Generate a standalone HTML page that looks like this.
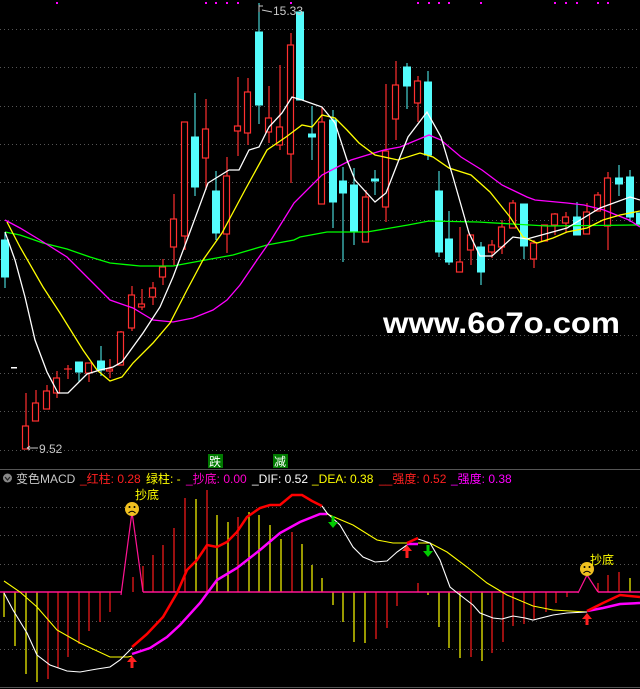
<!DOCTYPE html>
<html><head><meta charset="utf-8"><style>
html,body{margin:0;padding:0;background:#000;width:640px;height:689px;overflow:hidden}
svg{display:block}
text{font-family:"Liberation Sans","Noto Sans CJK SC",sans-serif}
</style></head><body>
<svg width="640" height="689" viewBox="0 0 640 689" xmlns="http://www.w3.org/2000/svg">
<g stroke="#555" stroke-dasharray="1,3" stroke-width="1">
<line x1="0" y1="29.5" x2="640" y2="29.5"/><line x1="0" y1="67.5" x2="640" y2="67.5"/><line x1="0" y1="106.5" x2="640" y2="106.5"/><line x1="0" y1="144.5" x2="640" y2="144.5"/><line x1="0" y1="182.5" x2="640" y2="182.5"/><line x1="0" y1="220.5" x2="640" y2="220.5"/><line x1="0" y1="259.5" x2="640" y2="259.5"/><line x1="0" y1="297.5" x2="640" y2="297.5"/><line x1="0" y1="335.5" x2="640" y2="335.5"/><line x1="0" y1="373.5" x2="640" y2="373.5"/><line x1="0" y1="411.5" x2="640" y2="411.5"/><line x1="0" y1="450.5" x2="640" y2="450.5"/>
<line x1="0" y1="507.5" x2="640" y2="507.5"/><line x1="0" y1="535.5" x2="640" y2="535.5"/><line x1="0" y1="564.5" x2="640" y2="564.5"/><line x1="0" y1="621.5" x2="640" y2="621.5"/><line x1="0" y1="649.5" x2="640" y2="649.5"/>
</g>
<line x1="0" y1="469.5" x2="640" y2="469.5" stroke="#555"/>
<line x1="0" y1="687.5" x2="640" y2="687.5" stroke="#555"/>
<g fill="#ff00ff">
<rect x="56" y="2" width="2" height="2"/><rect x="205" y="2" width="2" height="2"/><rect x="215" y="2" width="2" height="2"/><rect x="226" y="2" width="2" height="2"/><rect x="237" y="2" width="2" height="2"/><rect x="290" y="2" width="2" height="2"/><rect x="417" y="2" width="2" height="2"/><rect x="428" y="2" width="2" height="2"/><rect x="438" y="2" width="2" height="2"/><rect x="448" y="2" width="2" height="2"/><rect x="480" y="2" width="2" height="2"/><rect x="554" y="2" width="2" height="2"/><rect x="565" y="2" width="2" height="2"/><rect x="576" y="2" width="2" height="2"/><rect x="597" y="2" width="2" height="2"/><rect x="607" y="2" width="2" height="2"/>
</g>
<g stroke="#54fcfc" fill="#54fcfc">
<line x1="5" y1="232" x2="5" y2="288"/><rect x="1.5" y="240" width="7" height="37"/>
<line x1="79" y1="362" x2="79" y2="382"/><rect x="75.5" y="362" width="7" height="10"/>
<line x1="101" y1="346" x2="101" y2="376"/><rect x="97.5" y="361" width="7" height="9"/>
<line x1="195" y1="93" x2="195" y2="196"/><rect x="191.5" y="137" width="7" height="50"/>
<line x1="216" y1="171" x2="216" y2="240"/><rect x="212.5" y="191" width="7" height="42"/>
<line x1="259" y1="3" x2="259" y2="124"/><rect x="255.5" y="32" width="7" height="73"/>
<line x1="300" y1="12" x2="300" y2="100"/><rect x="296.5" y="12" width="7" height="88"/>
<line x1="312" y1="106" x2="312" y2="160"/><rect x="308.5" y="134" width="7" height="3"/>
<line x1="333" y1="110" x2="333" y2="228"/><rect x="329.5" y="120" width="7" height="82"/>
<line x1="343" y1="167" x2="343" y2="262"/><rect x="339.5" y="181" width="7" height="12"/>
<line x1="354" y1="168" x2="354" y2="245"/><rect x="350.5" y="185" width="7" height="47"/>
<line x1="375" y1="170" x2="375" y2="195"/><rect x="371.5" y="179" width="7" height="2"/>
<line x1="407" y1="63" x2="407" y2="109"/><rect x="403.5" y="67" width="7" height="19"/>
<line x1="428" y1="71" x2="428" y2="160"/><rect x="424.5" y="82" width="7" height="73"/>
<line x1="439" y1="171" x2="439" y2="257"/><rect x="435.5" y="191" width="7" height="61"/>
<line x1="449" y1="211" x2="449" y2="265"/><rect x="445.5" y="239" width="7" height="23"/>
<line x1="481" y1="242" x2="481" y2="285"/><rect x="477.5" y="247" width="7" height="25"/>
<line x1="524" y1="204" x2="524" y2="259"/><rect x="520.5" y="204" width="7" height="42"/>
<line x1="577" y1="202" x2="577" y2="235"/><rect x="573.5" y="217" width="7" height="18"/>
<line x1="619" y1="165" x2="619" y2="196"/><rect x="615.5" y="178" width="7" height="6"/>
<line x1="630" y1="170" x2="630" y2="222"/><rect x="626.5" y="177" width="7" height="40"/>
<rect x="636.5" y="213" width="7" height="11"/>
</g>
<g stroke="#ff3030" fill="#000" stroke-width="1.2">
<line x1="26" y1="393" x2="26" y2="449"/><rect x="22.5" y="426" width="6" height="23"/>
<line x1="36" y1="390" x2="36" y2="421"/><rect x="32.5" y="403" width="6" height="18"/>
<line x1="47" y1="385" x2="47" y2="409"/><rect x="43.5" y="391" width="6" height="18"/>
<line x1="57" y1="371" x2="57" y2="398"/><rect x="53.5" y="378" width="6" height="15"/>
<line x1="68" y1="365" x2="68" y2="379"/><line x1="64" y1="369" x2="72" y2="369"/>
<line x1="89" y1="363" x2="89" y2="382"/><rect x="85.5" y="363" width="6" height="10"/>
<line x1="110" y1="359" x2="110" y2="378"/><rect x="106.5" y="369" width="6" height="2"/>
<line x1="121" y1="331" x2="121" y2="365"/><rect x="117.5" y="332" width="6" height="33"/>
<line x1="132" y1="286" x2="132" y2="331"/><rect x="128.5" y="295" width="6" height="33"/>
<line x1="142" y1="289" x2="142" y2="310"/><rect x="138.5" y="304" width="6" height="3"/>
<line x1="153" y1="282" x2="153" y2="305"/><rect x="149.5" y="288" width="6" height="9"/>
<line x1="163" y1="259" x2="163" y2="285"/><rect x="159.5" y="267" width="6" height="10"/>
<line x1="174" y1="194" x2="174" y2="265"/><rect x="170.5" y="219" width="6" height="28"/>
<line x1="185" y1="122" x2="185" y2="250"/><rect x="181.5" y="122" width="6" height="114"/>
<line x1="206" y1="99" x2="206" y2="190"/><rect x="202.5" y="129" width="6" height="29"/>
<line x1="227" y1="157" x2="227" y2="253"/><rect x="223.5" y="176" width="6" height="58"/>
<line x1="238" y1="77" x2="238" y2="156"/><rect x="234.5" y="126" width="6" height="5"/>
<line x1="248" y1="78" x2="248" y2="145"/><rect x="244.5" y="92" width="6" height="41"/>
<line x1="269" y1="86" x2="269" y2="143"/><rect x="265.5" y="118" width="6" height="14"/>
<line x1="280" y1="65" x2="280" y2="150"/><rect x="276.5" y="127" width="6" height="18"/>
<line x1="291" y1="33" x2="291" y2="183"/><rect x="287.5" y="45" width="6" height="109"/>
<line x1="322" y1="107" x2="322" y2="204"/><rect x="318.5" y="122" width="6" height="82"/>
<line x1="366" y1="190" x2="366" y2="242"/><rect x="362.5" y="197" width="6" height="45"/>
<line x1="386" y1="84" x2="386" y2="222"/><rect x="382.5" y="151" width="6" height="56"/>
<line x1="396" y1="61" x2="396" y2="140"/><rect x="392.5" y="85" width="6" height="34"/>
<line x1="418" y1="76" x2="418" y2="122"/><rect x="414.5" y="81" width="6" height="22"/>
<line x1="460" y1="227" x2="460" y2="272"/><rect x="456.5" y="262" width="6" height="10"/>
<line x1="471" y1="235" x2="471" y2="265"/><rect x="467.5" y="235" width="6" height="15"/>
<line x1="492" y1="240" x2="492" y2="258"/><rect x="488.5" y="245" width="6" height="7"/>
<line x1="502" y1="220" x2="502" y2="254"/><rect x="498.5" y="227" width="6" height="20"/>
<line x1="513" y1="200" x2="513" y2="228"/><rect x="509.5" y="203" width="6" height="25"/>
<line x1="534" y1="240" x2="534" y2="268"/><rect x="530.5" y="243" width="6" height="16"/>
<line x1="545" y1="225" x2="545" y2="241"/><rect x="541.5" y="225" width="6" height="16"/>
<line x1="555" y1="213" x2="555" y2="235"/><rect x="551.5" y="214" width="6" height="11"/>
<line x1="566" y1="212" x2="566" y2="232"/><rect x="562.5" y="217" width="6" height="6"/>
<line x1="587" y1="203" x2="587" y2="234"/><rect x="583.5" y="212" width="6" height="22"/>
<line x1="598" y1="192" x2="598" y2="211"/><rect x="594.5" y="195" width="6" height="16"/>
<line x1="608" y1="172" x2="608" y2="250"/><rect x="604.5" y="178" width="6" height="48"/>
</g>
<g fill="none" stroke-width="1.3">
<polyline stroke="#00ff00" points="5,232 20,235 43,243 67,249 90,257 110,263 140,266 173,266 200,261 233,255 267,245 294,240 300,237 327,232 367,232 408,225 429,221 478,222 547,226 637,225 640,225"/>
<polyline stroke="#ff00ff" points="5,220 20,228 40,240 67,257 90,280 110,300 133,308 153,320 173,322 193,318 213,310 227,300 240,285 257,260 271,240 294,203 322,175 351,160 384,150 400,147 429,135 441,140 461,157 482,170 502,185 527,197 535,200 567,203 584,205 604,210 629,220 640,227"/>
<polyline stroke="#ffff00" points="7,222 20,247 43,287 60,313 83,350 97,370 110,381 122,377 133,363 153,343 170,323 187,290 203,260 222,233 245,190 267,150 286,137 302,125 312,127 322,115 335,118 347,130 359,143 375,155 398,160 420,153 433,157 449,168 471,175 490,192 510,217 523,237 537,243 553,238 567,232 587,228 603,220 620,215 640,211"/>
<polyline stroke="#ffffff" points="5,232 15,260 25,297 35,340 47,372 58,393 68,393 87,374 100,370 113,367 122,362 143,333 160,307 173,277 187,240 208,183 229,170 239,170 249,150 259,147 269,127 282,113 292,97 302,100 322,107 335,123 347,160 355,180 375,202 386,193 400,157 408,137 427,112 441,137 453,177 469,233 480,256 492,256 513,237 527,239 567,228 600,208 630,197 640,200"/>
</g>
<rect x="11" y="367" width="6" height="1.5" fill="#fff"/>
<text x="273" y="15" fill="#c8c8c8" font-size="12">15.33</text>
<path d="M259 5 L259 12 M259 6 L263 6 M262 10 L272 12" stroke="#c8c8c8" fill="none"/>
<text x="39" y="453" fill="#c8c8c8" font-size="12">9.52</text>
<path d="M27 448 L38 448 M27 448 L30 446 M27 448 L30 450" stroke="#c8c8c8" fill="none"/>
<rect x="208" y="454" width="15" height="14" fill="#007a00"/>
<text x="209" y="466" fill="#fff" font-size="12">跌</text>
<rect x="273" y="454" width="15" height="14" fill="#007a00"/>
<text x="274" y="466" fill="#fff" font-size="12">减</text>
<circle cx="7.5" cy="478" r="4.5" fill="#888"/>
<path d="M5 477 L7.5 480 L10 477" stroke="#222" fill="none" stroke-width="1.3"/>
<text y="483" font-size="12">
<tspan x="16" fill="#c8c8c8">变色MACD</tspan>
<tspan x="80" fill="#ff2020">_红柱: 0.28</tspan>
<tspan x="146" fill="#ffff00">绿柱: -</tspan>
<tspan x="186" fill="#ff00cc">_抄底: 0.00</tspan>
<tspan x="252" fill="#ffffff">_DIF: 0.52</tspan>
<tspan x="312" fill="#ffff00">_DEA: 0.38</tspan>
<tspan x="379" fill="#ff2020">__强度: 0.52</tspan>
<tspan x="451" fill="#ff00ff">_强度: 0.38</tspan>
</text>
<g stroke-width="1.2">
<g stroke="#ffff00">
<line x1="4" y1="592" x2="4" y2="617"/><line x1="15" y1="592" x2="15" y2="646"/><line x1="26" y1="592" x2="26" y2="674"/><line x1="37" y1="592" x2="37" y2="682"/>
<line x1="196" y1="592" x2="196" y2="499"/><line x1="217" y1="592" x2="217" y2="515"/><line x1="228" y1="592" x2="228" y2="522"/><line x1="249" y1="592" x2="249" y2="512"/><line x1="259" y1="592" x2="259" y2="515"/><line x1="270" y1="592" x2="270" y2="525"/><line x1="281" y1="592" x2="281" y2="539"/><line x1="302" y1="592" x2="302" y2="544"/><line x1="312" y1="592" x2="312" y2="565"/>
<line x1="322" y1="592" x2="322" y2="578"/><line x1="333" y1="592" x2="333" y2="605"/><line x1="343" y1="592" x2="343" y2="622"/><line x1="354" y1="592" x2="354" y2="642"/><line x1="365" y1="592" x2="365" y2="643"/><line x1="428" y1="592" x2="428" y2="595"/><line x1="439" y1="592" x2="439" y2="627"/><line x1="449" y1="592" x2="449" y2="648"/><line x1="460" y1="592" x2="460" y2="658"/><line x1="482" y1="592" x2="482" y2="661"/><line x1="630" y1="592" x2="630" y2="578"/>
</g>
<g stroke="#ff1a1a">
<line x1="48" y1="592" x2="48" y2="679"/><line x1="58" y1="592" x2="58" y2="668"/><line x1="68" y1="592" x2="68" y2="657"/><line x1="79" y1="592" x2="79" y2="644"/><line x1="89" y1="592" x2="89" y2="631"/><line x1="100" y1="592" x2="100" y2="622"/><line x1="110" y1="592" x2="110" y2="612"/>
<line x1="133" y1="592" x2="133" y2="577"/><line x1="143" y1="592" x2="143" y2="566"/><line x1="153" y1="592" x2="153" y2="555"/><line x1="163" y1="592" x2="163" y2="545"/><line x1="174" y1="592" x2="174" y2="528"/><line x1="185" y1="592" x2="185" y2="498"/><line x1="207" y1="592" x2="207" y2="490"/><line x1="238" y1="592" x2="238" y2="517"/><line x1="292" y1="592" x2="292" y2="532"/>
<line x1="376" y1="592" x2="376" y2="639"/><line x1="387" y1="592" x2="387" y2="628"/><line x1="397" y1="592" x2="397" y2="606"/><line x1="418" y1="592" x2="418" y2="583"/>
<line x1="471" y1="592" x2="471" y2="657"/><line x1="492" y1="592" x2="492" y2="653"/><line x1="503" y1="592" x2="503" y2="642"/><line x1="513" y1="592" x2="513" y2="626"/><line x1="524" y1="592" x2="524" y2="624"/><line x1="534" y1="592" x2="534" y2="619"/><line x1="546" y1="592" x2="546" y2="612"/><line x1="556" y1="592" x2="556" y2="603"/><line x1="567" y1="592" x2="567" y2="597"/>
<line x1="598" y1="592" x2="598" y2="583"/><line x1="608" y1="592" x2="608" y2="575"/><line x1="619" y1="592" x2="619" y2="572"/>
</g>
</g>
<line x1="0" y1="592" x2="121" y2="592" stroke="#ff1493" stroke-width="1.5"/>
<line x1="143" y1="592" x2="578" y2="592" stroke="#ff1493" stroke-width="1.5"/>
<line x1="598" y1="592" x2="640" y2="592" stroke="#ff1493" stroke-width="1.5"/>
<polyline points="121,595 132,512 143,592" fill="none" stroke="#ff1493" stroke-width="1.2"/>
<polyline points="578,593 587,575 598,592" fill="none" stroke="#ff1493" stroke-width="1.2"/>
<g fill="none">
<polyline stroke="#ffff00" stroke-width="1.1" points="4,581 20,592 37,607 57,630 80,643 110,657 128,657 132,656"/>
<polyline stroke="#ffffff" stroke-width="1.1" points="4,593 13,610 27,633 37,655 50,665 67,671 80,672 97,669 110,667 120,660 132,648"/>
<polyline stroke="#ff00ff" stroke-width="2.5" points="132,654 150,648 167,637 180,625 200,603 217,580 237,568 260,550 280,533 300,522 320,514 327,514"/>
<polyline stroke="#ff0000" stroke-width="2.5" points="132,647 147,634 163,617 177,593 187,570 197,560 207,545 217,547 227,542 237,532 247,517 260,508 270,505 280,505 292,495 302,495 312,501 322,506"/>
<polyline stroke="#ffff00" stroke-width="1.1" points="327,514 353,525 377,540 393,543 407,543"/>
<polyline stroke="#ffff00" stroke-width="1.1" points="418,543 430,543 447,552 467,567 487,583 507,595 533,606 553,610 587,612"/>
<polyline stroke="#ffffff" stroke-width="1.1" points="322,506 327,513 340,525 353,547 363,557 375,562 387,561 397,552 407,545"/>
<polyline stroke="#ffffff" stroke-width="1.1" points="418,539 430,543 440,560 450,587 460,595 473,605 480,613 493,618 502,619 513,616 525,618 533,620 553,615 567,613 587,612"/>
<polyline stroke="#ff00ff" stroke-width="2.5" points="407,544 418,544"/>
<polyline stroke="#ff0000" stroke-width="2.5" points="407,543 418,538"/>
<polyline stroke="#ff00ff" stroke-width="2.5" points="587,611 603,608 620,604 640,603"/>
<polyline stroke="#ff0000" stroke-width="2.5" points="587,611 603,603 620,595 640,597"/>
</g>
<g fill="#ff2020">
<path d="M132,656 L127,662 L130.5,662 L130.5,668 L133.5,668 L133.5,662 L137,662 Z"/>
<path d="M407,545 L402,551 L405.5,551 L405.5,558 L408.5,558 L408.5,551 L412,551 Z"/>
<path d="M587,613 L582,619 L585.5,619 L585.5,625 L588.5,625 L588.5,619 L592,619 Z"/>
</g>
<g fill="#00cc00">
<path d="M333,528 L328,522 L331.5,522 L331.5,516 L334.5,516 L334.5,522 L338,522 Z"/>
<path d="M428,557 L423,551 L426.5,551 L426.5,545 L429.5,545 L429.5,551 L433,551 Z"/>
</g>
<g>
<circle cx="132" cy="509" r="7" fill="#f0c020"/>
<circle cx="129.5" cy="507" r="1" fill="#000"/><circle cx="134.5" cy="507" r="1" fill="#000"/>
<path d="M128.5 513 Q132 509.5 135.5 513" stroke="#000" fill="none"/>
<circle cx="587" cy="569" r="7" fill="#f0c020"/>
<circle cx="584.5" cy="567" r="1" fill="#000"/><circle cx="589.5" cy="567" r="1" fill="#000"/>
<path d="M583.5 573 Q587 569.5 590.5 573" stroke="#000" fill="none"/>
</g>
<text x="135" y="499" fill="#ffff00" font-size="12">抄底</text>
<text x="590" y="564" fill="#ffff00" font-size="12">抄底</text>
<text x="383" y="333" fill="#ffffff" font-size="30" font-weight="bold" textLength="237" lengthAdjust="spacingAndGlyphs" font-family="Liberation Sans, sans-serif">www.6o7o.com</text>
</svg>
</body></html>
